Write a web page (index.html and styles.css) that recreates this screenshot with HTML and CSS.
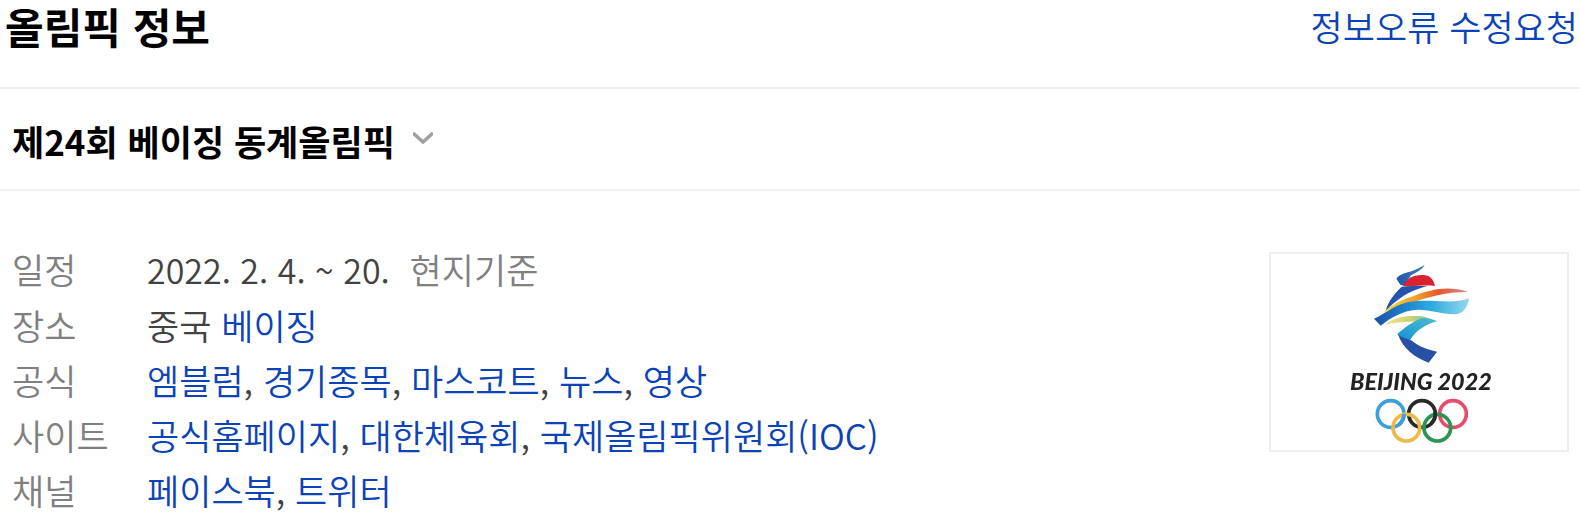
FILE: index.html
```html
<!DOCTYPE html>
<html lang="ko">
<head>
<meta charset="utf-8">
<title>올림픽 정보</title>
<link rel="stylesheet" href="styles.css">
</head>
<body>
<section class="panel">
  <header class="panel-head">
    <h2 class="title">올림픽 정보</h2>
    <a class="link report" href="#">정보오류 수정요청</a>
  </header>
  <div class="selector">
    <button class="selector-button" type="button">
      <span>제24회 베이징 동계올림픽</span>
      <svg class="chevron" viewBox="0 0 20 12" aria-hidden="true"><path d="M0 1L10 10L20 1" fill="none" stroke="#a0a0a0" stroke-width="3.500"/></svg>
    </button>
  </div>
  <div class="content">
    <dl class="facts">
      <dt>일정</dt>
      <dd><span class="date">2022. 2. 4. ~ 20.</span> <span class="note">현지기준</span></dd>
      <dt>장소</dt>
      <dd>중국 <a class="link" href="#">베이징</a></dd>
      <dt>공식</dt>
      <dd><a class="link" href="#">엠블럼</a>, <a class="link" href="#">경기종목</a>, <a class="link" href="#">마스코트</a>, <a class="link" href="#">뉴스</a>, <a class="link" href="#">영상</a></dd>
      <dt>사이트</dt>
      <dd><a class="link" href="#">공식홈페이지</a>, <a class="link" href="#">대한체육회</a>, <a class="link" href="#">국제올림픽위원회(IOC)</a></dd>
      <dt>채널</dt>
      <dd><a class="link" href="#">페이스북</a>, <a class="link" href="#">트위터</a></dd>
    </dl>
    <a class="emblem" href="#" aria-label="베이징 2022">
      <svg viewBox="33 27 888 588">
        <defs>
          <linearGradient id="hat"><stop offset="0" stop-color="#1f55a8"/><stop offset="1" stop-color="#3f83b8"/></linearGradient>
          <linearGradient id="sun"><stop offset="0" stop-color="#f0dc4a"/><stop offset=".4" stop-color="#f39a2c"/><stop offset=".65" stop-color="#e4572e"/><stop offset="1" stop-color="#d98a94"/></linearGradient>
          <linearGradient id="wave"><stop offset="0" stop-color="#1b4da6"/><stop offset=".35" stop-color="#1c86cf"/><stop offset=".6" stop-color="#2cabe0"/><stop offset="1" stop-color="#96d8ee"/></linearGradient>
          <linearGradient id="leaf"><stop offset="0" stop-color="#f2e48c"/><stop offset=".5" stop-color="#cfd273"/><stop offset="1" stop-color="#59b9b8"/></linearGradient>
          <linearGradient id="leg" x1="1" y1="0" x2="0" y2="1"><stop offset="0" stop-color="#4dbccb"/><stop offset="1" stop-color="#1594d2"/></linearGradient>
        </defs>
        <g class="emblem-art">
          <path fill="url(#hat)" d="M409 101C416 90 432 84 450 80C468 75 480 66 494 60C486 74 470 82 453 91L432 122L421 119Z"/>
          <path fill="#d92331" d="M429 123C440 100 458 90 486 90C508 89 519 99 525 123C493 119 463 126 429 123Z"/>
          <path fill="#2454af" d="M425 125C450 121 474 124 501 123C472 132 449 141 431 152C411 165 393 180 377 198C382 174 402 146 425 125Z"/>
          <path fill="url(#sun)" d="M370 203C396 177 429 164 467 151C515 132 566 122 624 140C555 142 511 154 465 170C430 180 402 190 370 203Z"/>
          <path fill="url(#wave)" d="M342 221C377 205 398 184 437 173C496 157 576 181 627 160C625 182 613 203 592 207C551 211 519 194 475 194C427 196 394 217 362 242Z"/>
          <path fill="url(#leaf)" d="M374 240C401 214 445 211 485 214C501 217 514 222 526 229C475 231 431 227 374 240Z"/>
          <path fill="url(#leg)" d="M412 267C436 247 455 232 484 220C500 220 519 222 531 229C497 238 468 257 451 284C433 284 419 278 412 267Z"/>
          <path fill="#2651a5" d="M414 268C428 281 443 280 457 288C477 305 500 313 531 320L506 353C464 338 429 312 414 268Z"/>
          <text class="emblem-text" x="270" y="434">BEIJING 2022</text>
          <g fill="none" stroke-width="11">
            <circle cx="392" cy="507" r="40" stroke="#3b9fdb"/>
            <circle cx="486" cy="507" r="40" stroke="#292929"/>
            <circle cx="579" cy="507" r="40" stroke="#e84c6c"/>
            <circle cx="439" cy="548" r="40" stroke="#edba48"/>
            <circle cx="532" cy="548" r="40" stroke="#2d9455"/>
            <path d="M432 507A40 40 0 0 1 416 539" stroke="#3b9fdb"/>
            <path d="M525 500A40 40 0 0 1 513 536" stroke="#292929"/>
          </g>
        </g>
      </svg>
    </a>
  </div>
</section>
</body>
</html>
```
FILE: styles.css
```css
* { box-sizing: border-box; }

body {
  margin: 0;
  background: #fff;
  color: #424242;
  font-family: "Noto Sans CJK KR", sans-serif;
  font-size: 35px;
  font-weight: 350;
  line-height: 55px;
}

.link { color: #0c43b7; text-decoration: none; }

.panel-head {
  display: flex;
  justify-content: space-between;
  align-items: flex-start;
  padding: 0 2px 36px 5px;
  border-bottom: 2px solid #edf1f6;
  line-height: 51px;
}

.title {
  margin: 0;
  color: #000;
  font-size: 42px;
  font-weight: 700;
}

.selector {
  padding: 24px 12px 21px;
  border-bottom: 2px solid #edf1f6;
}

.selector-button {
  display: flex;
  align-items: center;
  gap: 18px;
  padding: 0;
  border: 0;
  background: none;
  color: #000;
  font: inherit;
  font-weight: 700;
}

.chevron { width: 20px; height: 12px; margin-bottom: 6px; }

.content {
  display: flex;
  justify-content: space-between;
  align-items: flex-start;
  padding: 50px 11px 0 12px;
}

.facts {
  display: grid;
  grid-template-columns: 135px auto;
  margin: 0;
}

.facts dt { color: #808080; }
.facts dd { margin: 0; }
.date { font-size: 34px; }
.note { margin-left: 10px; color: #808080; }

.emblem {
  width: 300px;
  margin-top: 11px;
  border: 2px solid #eee;
}

.emblem svg { display: block; width: 100%; }
.emblem-art { filter: blur(1px); }

.emblem-text {
  fill: #222;
  font-family: Lato, sans-serif;
  font-size: 70px;
  font-style: italic;
  font-weight: 900;
}
```
